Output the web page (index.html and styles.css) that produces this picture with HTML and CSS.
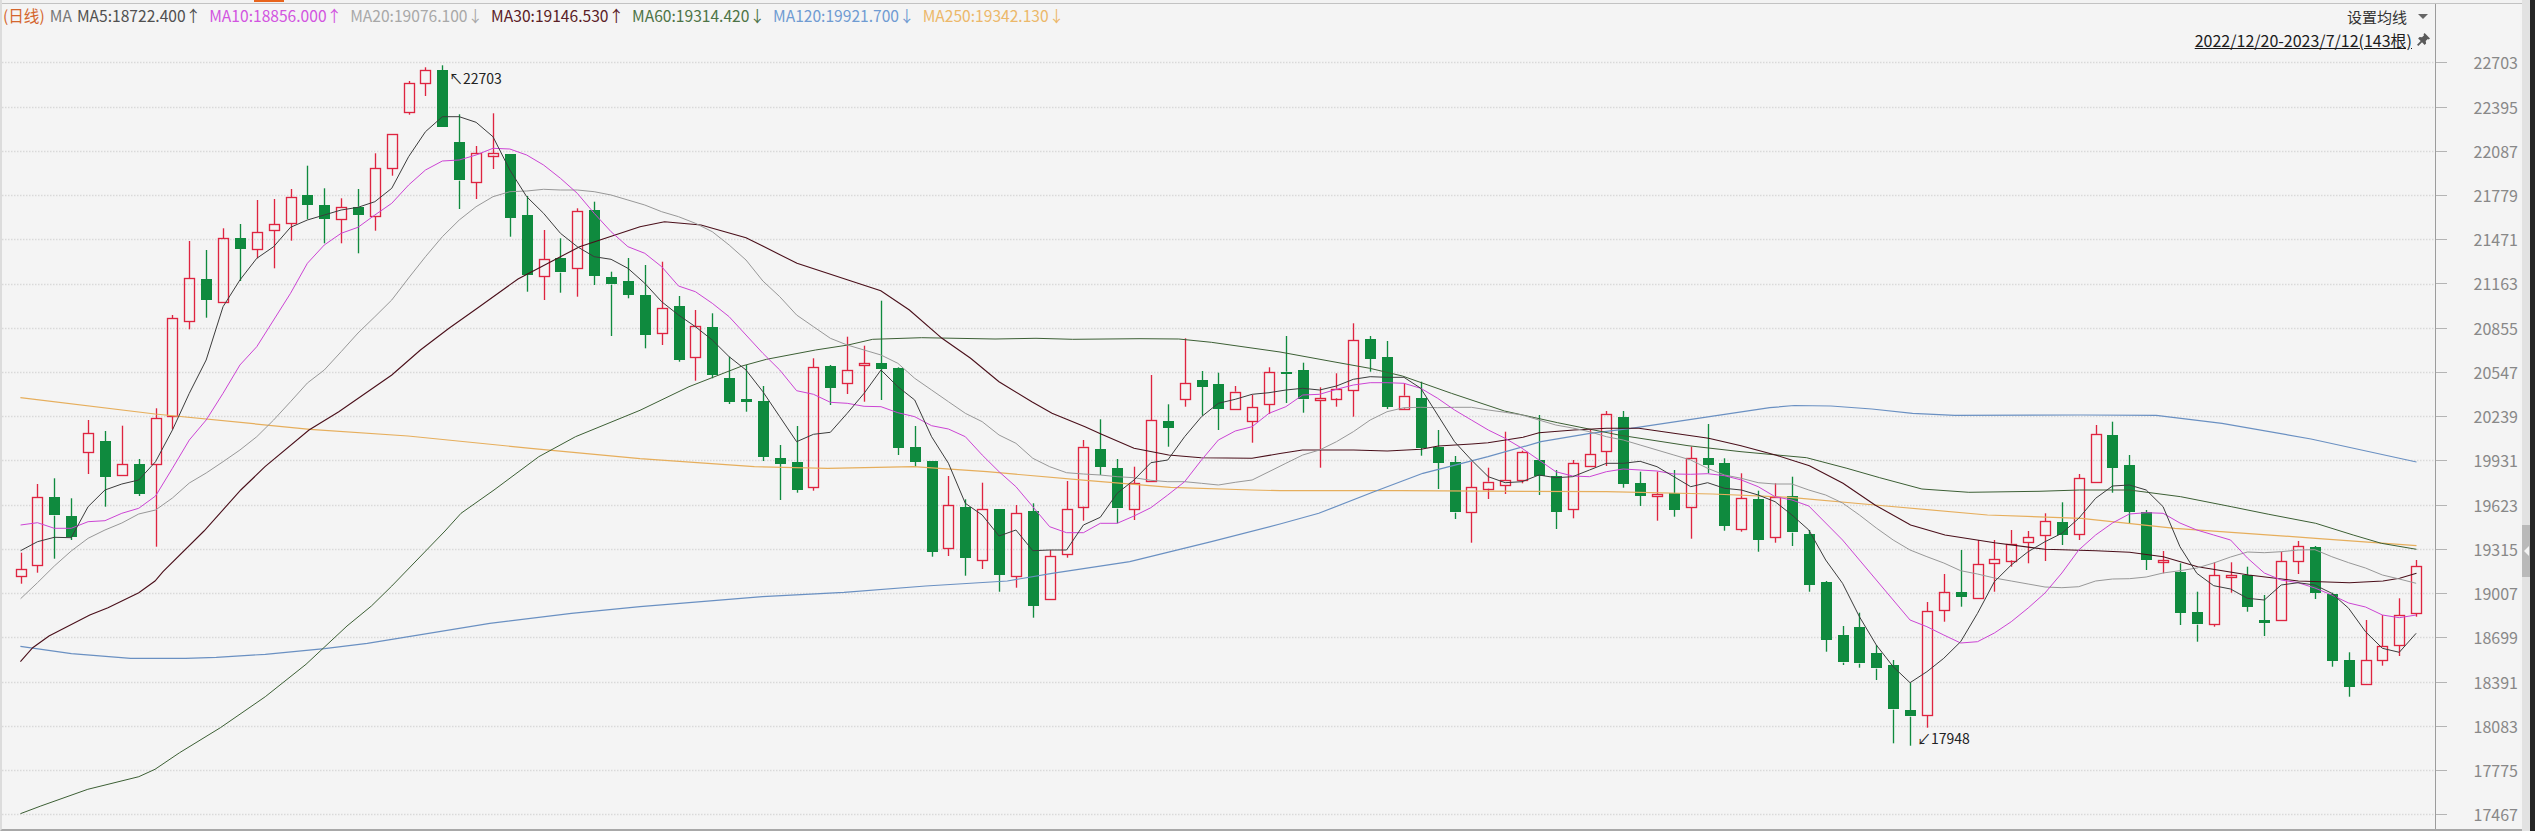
FILE: index.html
```html
<!DOCTYPE html>
<html lang="zh-CN">
<head>
<meta charset="utf-8">
<title>K线图</title>
<link rel="stylesheet" href="styles.css">
</head>
<body>
<div class="window">
  <div class="main">
    <div class="top-strip"><span class="active-tab"></span></div>
    <div class="chart-row">
      <div class="plot">
        <svg class="canvas" id="canvas" viewBox="2 4 2433 825" xmlns="http://www.w3.org/2000/svg"></svg>
        <div class="legend">
          <span class="period">(日线)</span>
          <span class="name">MA</span>
          <span class="ma5">MA5:18722.400↑</span>
          <span class="ma10">MA10:18856.000↑</span>
          <span class="ma20">MA20:19076.100↓</span>
          <span class="ma30">MA30:19146.530↑</span>
          <span class="ma60">MA60:19314.420↓</span>
          <span class="ma120">MA120:19921.700↓</span>
          <span class="ma250">MA250:19342.130↓</span>
        </div>
        <div class="tools">
          <div class="tool-row">
            <span class="settings">设置均线</span>
            <span class="caret"></span>
          </div>
          <div class="tool-row">
            <span class="range">2022/12/20-2023/7/12(143根)</span>
            <svg class="pin" viewBox="0 0 14 14" xmlns="http://www.w3.org/2000/svg">
              <path d="M8.2 0 L14 5.8 L12.6 7 L11.6 6.4 L9.4 8.6 L9.8 11.2 L8.2 12.8 L5.4 10 L1.4 14 L0 12.6 L4 8.6 L1.2 5.8 L2.8 4.2 L5.4 4.6 L7.6 2.4 L7 1.4 Z"/>
            </svg>
          </div>
        </div>
        <span class="extreme extreme-high">↖22703</span>
        <span class="extreme extreme-low">↙17948</span>
      </div>
      <div class="axis">
        <div class="tick">22703</div>
        <div class="tick">22395</div>
        <div class="tick">22087</div>
        <div class="tick">21779</div>
        <div class="tick">21471</div>
        <div class="tick">21163</div>
        <div class="tick">20855</div>
        <div class="tick">20547</div>
        <div class="tick">20239</div>
        <div class="tick">19931</div>
        <div class="tick">19623</div>
        <div class="tick">19315</div>
        <div class="tick">19007</div>
        <div class="tick">18699</div>
        <div class="tick">18391</div>
        <div class="tick">18083</div>
        <div class="tick">17775</div>
        <div class="tick">17467</div>
      </div>
    </div>
  </div>
  <div class="scrollbar"><div class="thumb"><span class="notch"></span></div></div>
  <div class="edge"></div>
</div>
<script src="chart.js"></script>
</body>
</html>
```

FILE: styles.css
```css
* { box-sizing: border-box; }
html, body { margin: 0; padding: 0; height: 100%; overflow: hidden; background: #f4f4f4; }
body { font-family: "Noto Sans CJK SC", "Liberation Sans", sans-serif; }

.window { display: flex; width: 100%; height: 831px; }
.main {
  flex: 1;
  min-width: 0;
  display: flex;
  flex-direction: column;
  border-left: 2px solid #dcdcdc;
  border-bottom: 2px solid #a8a8a8;
}
.top-strip {
  height: 4px;
  flex: none;
  border-bottom: 1px solid #c2c2c2;
  background: #f2f2f2;
  padding-left: 252px;
}
.active-tab { display: block; width: 30px; height: 2px; background: #e8641c; }
.chart-row { flex: 1; min-height: 0; display: flex; }

.plot { position: relative; width: 2433px; flex: none; }
.canvas { position: absolute; left: 0; top: 0; width: 2433px; height: 825px; display: block; }

.legend {
  position: relative;
  display: flex;
  gap: 8px;
  padding-left: 1px;
  height: 22px;
  align-items: center;
  font-size: 15.6px;
  line-height: 22px;
  white-space: nowrap;
}
.period { color: #d4662e; margin-right: -3px; }
.name { color: #777; margin-right: -3px; }
.ma5 { color: #505050; }
.ma10 { color: #d254e0; }
.ma20 { color: #a8a8a8; }
.ma30 { color: #5a2026; }
.ma60 { color: #4d7346; }
.ma120 { color: #6f9bd2; }
.ma250 { color: #ecb86a; }

.tools {
  position: absolute;
  right: 5px;
  top: 2px;
  display: flex;
  flex-direction: column;
  align-items: flex-end;
  gap: 2px;
}
.tool-row { display: flex; align-items: center; height: 21px; }
.settings { font-size: 15px; color: #333; line-height: 21px; }
.caret {
  width: 0;
  height: 0;
  margin: 0 2px 0 11px;
  border-left: 5px solid transparent;
  border-right: 5px solid transparent;
  border-top: 5px solid #666;
}
.range {
  font-size: 16px;
  line-height: 18px;
  color: #1c1c1c;
  text-decoration: underline;
}
.pin { width: 13px; height: 13px; margin-left: 5px; flex: none; }
.pin path { fill: #5a5a5a; }

.extreme { position: absolute; font-size: 14px; line-height: 18px; color: #222; white-space: nowrap; }
.extreme-high { left: 447px; top: 65px; }
.extreme-low { left: 1915px; top: 725px; }

.axis {
  flex: 1;
  min-width: 0;
  padding-top: 36.2px;
  border-left: 1px solid #9c9c9c;
}
.tick {
  height: 44.24px;
  display: flex;
  align-items: center;
  justify-content: flex-end;
  padding-right: 4px;
  position: relative;
  font-size: 16px;
  color: #888;
}
.tick::before {
  content: "";
  position: absolute;
  left: 0;
  top: 50%;
  width: 11px;
  height: 1px;
  background: #b4b4b4;
}

.scrollbar { width: 8px; flex: none; background: #e2e2e2; padding-top: 525px; }
.thumb {
  height: 52px;
  background: #b9b9b9;
  display: flex;
  align-items: center;
  justify-content: center;
}
.notch {
  width: 0;
  height: 0;
  border-top: 5px solid transparent;
  border-bottom: 5px solid transparent;
  border-right: 5px solid #f4f4f4;
}
.edge { width: 5px; flex: none; background: #262626; }
```

FILE: chart.js
```js
var X0 = 20.6, STEP = 16.87, NS = "http://www.w3.org/2000/svg";
var svg = document.getElementById("canvas");

function add(tag, attrs) {
  var el = document.createElementNS(NS, tag);
  for (var k in attrs) el.setAttribute(k, attrs[k]);
  svg.appendChild(el);
}

/* grid */
for (var g = 0; g < 18; g++) {
  var gy = Math.round(62.3 + g * 44.24) + 0.5;
  add("line", { x1: 2, x2: 2435, y1: gy, y2: gy, stroke: "#d9d9d9", "stroke-width": 1.5, "stroke-dasharray": "1.5 1.5" });
}

/* high, body top, body bottom, low, colour */
var K = [
[552.7,569.3,576.7,583.7,"r"],[484,497.3,565.3,572.7,"r"],[478.3,497.3,515.7,558.7,"g"],[498.3,516,537,540,"g"],
[420,433.3,452.7,474,"r"],[431,441,476.7,506.7,"g"],[425.7,464.3,475.7,475.7,"r"],[459,464,493.7,496,"g"],
[408.3,418.3,464.3,546.7,"r"],[315,318.3,416,429.3,"r"],[241,278.3,321.7,329.3,"r"],[250,279.3,300,317.7,"g"],
[228.3,238.3,302.7,302.7,"r"],[224,238,249,281,"g"],[200,232.3,249.7,258.3,"r"],[199,224.3,230.7,268.3,"r"],
[189,197.3,223.3,240.7,"r"],[165.7,195.3,205,219.3,"g"],[188.3,205,219,243.3,"g"],[198.3,207.3,219.7,243.3,"r"],
[189,206.7,215,253.3,"g"],[153.3,168.3,216.7,230.7,"r"],[134.3,134.3,168.3,175.7,"r"],[81,83.3,112.7,114.7,"r"],
[67.3,70.3,83.3,96,"r"],[65.3,70,126.7,126.7,"g"],[114.3,142.3,180.7,209,"g"],[146,153.3,182.3,199,"r"],
[113.3,153,155.7,169,"r"],[154,154,217.7,236.7,"g"],[196,215,275,291.7,"g"],[230,259.3,276.7,300,"r"],
[238.3,258.3,272.7,292.7,"g"],[208.3,211.3,268.3,296.7,"r"],[201.7,210,276,285,"g"],[271.7,277.3,284.7,336,"g"],
[258,281,295,298.3,"g"],[265,295,335,348.3,"g"],[261.7,308.3,333.3,345,"r"],[296,306,360,361.7,"g"],
[310,326.3,357.7,380.7,"r"],[313.3,327,375,378.3,"g"],[356.7,378,402,404,"g"],[365,399,402,411.7,"g"],
[386,401,456.7,461,"g"],[445,458,463.7,500,"g"],[426,462,490,492.7,"g"],[358.3,367.3,487.3,490.7,"r"],
[365,366,387.7,405,"g"],[336.7,370.3,383.7,394,"r"],[345.7,363.3,365.7,401.7,"r"],[300.7,363,369,400,"g"],
[367.3,368,447.7,455,"g"],[426,447,462,466.7,"g"],[461,461,551.7,556.7,"g"],[476,505.3,548.3,556,"r"],
[499.3,507,557.7,575.7,"g"],[482.7,509,560.3,569,"r"],[509,509,574.7,591.7,"g"],[505,513.3,576.7,587.7,"r"],
[503.3,511,605.7,617.7,"g"],[550,556.3,599.3,599.3,"r"],[481,509.3,554.3,557.7,"r"],[440,446.7,506.7,520.7,"r"],
[419.3,449,466.7,475,"g"],[459,468.3,508.7,523.3,"g"],[466.7,483.3,509.3,520,"r"],[375,420.3,481.3,481.3,"r"],
[404.3,421,427.7,446.7,"g"],[338.3,383.3,399.3,406.7,"r"],[371,380,386.7,415.7,"g"],[372.7,384,408.7,430,"g"],
[386,391.7,408.7,408.7,"r"],[395,407.3,421.3,442.7,"r"],[367.3,372.3,404.3,414,"r"],[336,371.7,373.3,403,"g"],
[362.7,370,399.3,412.7,"g"],[387.3,398.3,400.3,467.7,"r"],[373.3,388.7,398.3,406.7,"r"],[323.3,340.3,390.3,416.7,"r"],
[336,339,358.7,371.7,"g"],[341,357,406.7,409,"g"],[383.3,395.7,408.3,410,"r"],[381.7,398,448,455.7,"g"],
[430,446.7,462.7,489,"g"],[456,462.3,512.7,519,"g"],[461.7,487.3,512.3,542.7,"r"],[467.7,481.7,488.7,499,"r"],
[431.7,480.3,485.3,494,"r"],[450.7,452.3,480.7,483.3,"r"],[415,460,476,495,"g"],[470,476,511.7,529,"g"],
[460,463.3,509.3,518.3,"r"],[430,454.3,466.3,466.3,"r"],[411,414.3,451.7,466,"r"],[411,417,483.7,487.7,"g"],
[471.7,483,495.7,506,"g"],[471.7,494.3,496.7,520.7,"r"],[470,493.3,510,516.7,"g"],[446.7,458.3,507.3,538.7,"r"],
[424,458.3,465,473.3,"g"],[458.3,463,525.7,530.7,"g"],[473.3,498.3,529.3,531.7,"r"],[490.7,499,539.7,551.7,"g"],
[483.3,497.3,537.3,542.7,"r"],[476.7,496.3,532.7,546,"g"],[530,534,584.7,591.7,"g"],[581,582,639.7,651.7,"g"],
[626,635.3,662.7,665,"g"],[612.7,627.3,663.7,667.7,"g"],[645,653.3,668.7,680,"g"],[660,665.3,709.7,743.3,"g"],
[682.7,710.3,716.7,745.7,"g"],[602,611.3,715.3,727.7,"r"],[574,592.3,610.3,621.7,"r"],[550,592,596.7,606.7,"g"],
[540,564.3,598.7,598.7,"r"],[540,559.3,563.7,591.7,"r"],[530,543.7,560.3,566.7,"r"],[531,537.3,542.3,563.3,"r"],
[513.3,521.3,535.7,561,"r"],[502.3,522,534.7,545,"g"],[474,478.3,534.7,540,"r"],[425,434.3,482.3,482.3,"r"],
[421.7,435,467.7,492.7,"g"],[455,465,512,523.3,"g"],[510,512.3,560,570,"g"],[551,560.3,561.3,573.3,"r"],
[563.3,572,612.7,625,"g"],[591.7,612.3,624.7,641.7,"g"],[562.3,575.3,624.7,626.7,"r"],[562.3,575.3,576.7,592.7,"r"],
[566.7,574.7,607,611.7,"g"],[595,620,622.7,636,"g"],[551.7,561.3,620.7,620.7,"r"],[541,546.3,561.7,574,"r"],
[546,547,592.7,599,"g"],[592.7,594,660.7,666.7,"g"],[652.3,660,686.7,696.7,"g"],[620,660.3,684.7,684.7,"r"],
[615,646.3,660.3,665.7,"r"],[598.3,615.3,645.3,656,"r"],[560,566.3,613.3,616.7,"r"]
];
var RED = "#de2440", GREEN = "#0f8a3e";
K.forEach(function (c, i) {
  var x = Math.round(X0 + i * STEP), col = c[4] === "r" ? RED : GREEN;
  var pen = { stroke: col, "stroke-width": 1.35 };
  function wick(a, b) {
    if (b - a < 0.5) return;
    add("line", Object.assign({ x1: x + 0.5, x2: x + 0.5, y1: a, y2: b }, pen));
  }
  wick(c[0], c[1]);
  wick(c[2], c[3]);
  if (c[4] === "r") {
    add("rect", Object.assign({ x: x - 4.5, y: Math.round(c[1]) + 0.5, width: 10, height: Math.max(2, Math.round(c[2] - c[1])), fill: "none" }, pen));
  } else {
    add("rect", { x: x - 5, y: Math.round(c[1]), width: 11, height: Math.max(2, Math.round(c[2] - c[1])), fill: GREEN, "shape-rendering": "crispEdges" });
  }
});

function ix(i) { return X0 + i * STEP; }
function byIndex(ys) { return ys.map(function (y, i) { return [ix(i), y]; }); }

var MA5 = byIndex([550.7,541.7,537.3,537.7,506.7,490,484,480,461.7,430,393.3,360,306.7,280,258.3,246.7,227.3,220,215,210,207.3,201.7,188.3,156.7,131.7,116.7,116.7,122.3,136.7,170,196.7,213.3,233.3,246.7,256.7,259.3,268.3,283.3,301.7,315,326.7,340,356.7,370,391.7,416.7,441.7,434.3,432.3,413.3,393.3,370,386.7,400,436.7,463.3,503.3,515,536,530,550.7,550,550,525,517.3,493.3,480,462.7,460,436.7,416.7,403.3,399.3,394.3,392.7,390,388.3,390,386,379.3,376.7,377.3,377.3,388.3,415,441.7,460,476.7,482.7,481.7,475,477.7,476.7,470,463.3,463.3,461.3,466.7,476.7,486.7,482.7,488.3,490,495,501.7,515,530,560,583.3,616.7,645,666.7,682.7,671.7,658.3,641.7,613.3,581.7,565,551.7,541.7,533.3,518.3,498.3,486,485,490,506.7,546.7,573.3,585.7,589,598.3,600,585,582.7,585,593.3,608.3,631.7,648.3,652.3,633.3]);

var MA10 = byIndex([525,522.7,528.3,528.3,521.7,520.7,513.3,508.3,496,468.3,440,420,393.3,365,346.7,320,293.3,263.3,245,233.3,227.3,215,203.3,185,170,161,160,155,148.3,149,155,165,178.3,193.3,213.3,231.7,246.7,253.3,266.7,286,291.7,303.3,316.7,335,353.3,370,390.7,394.3,402.3,403.3,406.3,406.7,412.7,416.7,425.7,429,436.7,455,471.7,486.7,506.7,526.7,532.7,532.7,523.3,523.3,516,507.7,495,481.7,460,440,431,426.7,413.3,406.7,395,394.3,389.3,385,382.7,382.7,383.3,388.3,398.3,410,420,430,438.3,448.3,460,471.7,476,476.7,471.7,469,470,471,474,474.3,473.7,475.7,480,486.7,496.7,500,506,523,540,560,580,600,620,626.7,635,643,641.7,633,621.7,608,593,573,550,535,523,514,512.7,513.3,523,530,535,540,558,573,580,582.7,588,595,603,607,615,617.7,615]);

var MA20 = byIndex([598.7,582.7,566,551,538.3,530,523,514,510,498,483,473,461.7,450,436.7,420,401.7,383,370,351.7,333,316.7,300,278,256.7,236.7,220,206.7,196.7,191.7,191,189.3,190,190,191.7,195,200,205,211.7,216.7,223.3,231.7,245,260,281,296.7,315,326.7,338.3,345,350,355,363.3,378.3,390,401.7,413.3,421.7,435,443.3,458.3,466.7,472.7,474,475,476.7,477.7,480.3,481.7,481.7,483.3,485,482.3,480,471.7,463.3,455,450,441.7,431.7,420,411.7,407.7,407.3,407.7,407.3,407.3,410,412.3,415,420,425,428,431.7,436.7,440,445,450,455,460,468.3,475,478.3,482.7,484,484,490,495,503,515,528,540,550,556.7,563,570.7,574,578,581,584,587,587.7,586.7,581,579,578.7,577,573,570.7,568,563,557,552,552.7,551.7,550,549.7,556.7,562.7,568,575,579,583.3]);

var MA30 = [[20.4,661.7],[32.7,647.7],[49,636],[89.8,615],[108,607.7],[138.8,592.7],[155,581],[163,571.7],[204,531],[240.8,490],[265,466.7],[309,430],[338.8,411.7],[391.8,375],[420.4,350],[449,328.3],[477.6,308],[518,279],[579.6,246.7],[640,226.7],[664.5,221.7],[701,225],[746,237.7],[797,263.3],[848,280],[880.8,290.7],[909.4,310],[942,338.3],[970.6,358.3],[999,381.7],[1031.8,401.7],[1052,413.3],[1085,426.7],[1101,434],[1134,448.3],[1168.6,455],[1201,457.7],[1252,458.3],[1280,453.5],[1302.4,450],[1353.5,450],[1387.3,451],[1421,449.3],[1438.4,446],[1471.8,444],[1488,442.7],[1523,437.3],[1539,432.7],[1574,430],[1606.5,428.3],[1639,428.3],[1708.6,438.3],[1741,445.7],[1775.5,455],[1809.4,465.7],[1843,483.3],[1875,505],[1910.6,525],[1945,535],[1994.6,542.7],[2045,549.3],[2096,550.7],[2129.6,552.3],[2163.3,556.7],[2197.6,566.7],[2248.7,575],[2298.4,581],[2349.5,582.7],[2383,581],[2399.6,578.3],[2416.5,573.3]];

var MA60 = [[20.4,813.7],[40.8,806],[87.8,789.3],[138.8,776.7],[155,769.3],[179.6,752.7],[220.4,727.7],[265.3,696.7],[306,664.3],[347,626],[371.4,606],[391.8,586],[445,531],[461,513.3],[494,490],[538.8,456.7],[575.5,436.7],[640,410.3],[689,386.7],[742,366],[766.5,359.3],[815.5,350],[848,345],[872.7,339.3],[921.6,337.7],[995,339],[1036,338.3],[1072.7,339.3],[1140,338.7],[1178.8,339],[1211.4,342.3],[1280,352],[1333,361.7],[1369.8,368.3],[1402.4,376],[1451.4,393.3],[1504.5,411],[1557.6,422.7],[1618.8,435],[1688,445.7],[1741,451.7],[1806.5,457.7],[1846.9,468.3],[1879.7,477.7],[1921.9,489],[1968.8,492.3],[2039,491.3],[2079.4,490],[2129.6,490],[2180.7,496.7],[2231.3,506.7],[2268.8,514.3],[2315.7,523.3],[2353.2,535],[2381.3,543.3],[2416.5,549.3]];

var MA120 = [[20.4,646.3],[71.4,653.7],[130.6,658.3],[185.7,658.3],[216.3,657.3],[265.3,654.3],[324.5,648.7],[367.3,643.3],[428.6,633.3],[489.8,623.3],[571.4,613.3],[640,606.7],[762.4,596.7],[844,592.3],[925.7,586],[1007.3,581],[1052,573.3],[1129.8,561.7],[1211.4,541.7],[1280,524],[1318.8,513.3],[1373.9,491.7],[1422.9,473.3],[1488,456.7],[1541,441.7],[1590,433.3],[1631,428.3],[1704.5,417.3],[1769.8,407.7],[1794.3,405.5],[1831,406],[1871.8,409],[1912.5,413.3],[1954.7,415.3],[2081.3,415],[2156.3,415.3],[2222,423.3],[2311,439],[2416.5,462]];

var MA250 = [[20.4,397.7],[155,414],[310,429.3],[408,436],[530.6,448.3],[640,458.6],[754.3,466.7],[827.8,468.3],[913.5,466.7],[987,471.7],[1089,480.7],[1170.6,487.3],[1252,490],[1280,490.7],[1402,490.7],[1606.5,491.7],[1712.7,494],[1790.2,497.3],[1875,505],[1987.5,515],[2081.3,518.3],[2175,528.3],[2315.7,538.3],[2416.5,545.7]];

[[MA250,"#e6ae5c",1.2],[MA120,"#6a90c2",1.2],[MA60,"#3c5f34",1],[MA30,"#4a0f1a",1.1],[MA20,"#989898",1],[MA10,"#cc44d4",1],[MA5,"#3c3c3c",1]].forEach(function (l) {
  add("polyline", {
    points: l[0].map(function (p) { return p[0] + "," + p[1]; }).join(" "),
    fill: "none",
    stroke: l[1],
    "stroke-width": l[2]
  });
});
```
